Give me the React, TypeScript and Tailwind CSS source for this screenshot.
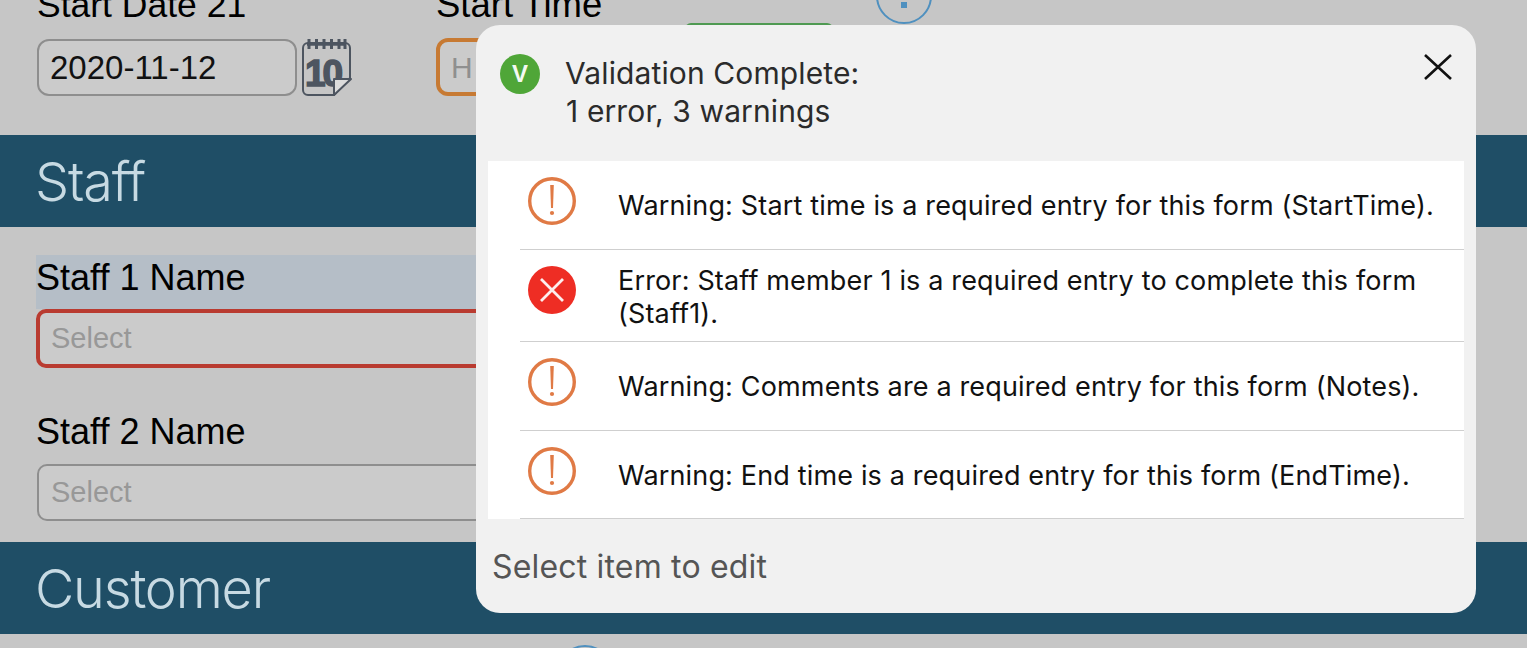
const Warn = () => (
  <svg width="50" height="50" viewBox="0 0 50 50" fill="none">
    <circle cx="25" cy="25" r="22.3" stroke="#e07a45" strokeWidth="3.4" />
    <path d="M23.2 9h3.6l-.8 23h-2L23.2 9Z" fill="#e07a45" />
    <circle cx="25" cy="37" r="2.1" fill="#e07a45" />
  </svg>
);

const Err = () => (
  <svg width="50" height="50" viewBox="0 0 50 50" fill="none">
    <circle cx="25" cy="25" r="24" fill="#ee2d24" />
    <path d="M14 14l22 22M36 14L14 36" stroke="#fdeeee" strokeWidth="2.8" />
  </svg>
);

const Calendar = () => (
  <svg width="50" height="59" viewBox="0 0 50 59" fill="none">
    <path d="M32 57H6a5 5 0 0 1-5-5V10a5 5 0 0 1 5-5h37a5 5 0 0 1 5 5v30L32 57Z" stroke="#4d5560" strokeWidth="2" />
    <path d="M7 1v10M14.500 1v10M22 1v10M29.500 1v10M37 1v10M43 1v10" stroke="#4d5560" strokeWidth="3" />
    <path d="M5 6.500h39" stroke="#4d5560" strokeWidth="2.500" />
    <text x="3" y="48" fontFamily="'Liberation Sans', sans-serif" fontWeight="700" fontSize="37" letterSpacing="-3" stroke="#4d5560" strokeWidth="1.500" fill="#4d5560">10</text>
    <path d="M32 57V41h17L32 57Z" fill="#dcdcdc" stroke="#4d5560" strokeWidth="2" strokeLinejoin="round" />
  </svg>
);

const rows = [
  { k: "w", h: "h-[89px]", text: "Warning: Start time is a required entry for this form (StartTime)." },
  { k: "e", h: "h-[92px]", text: "Error: Staff member 1 is a required entry to complete this form (Staff1)." },
  { k: "w", h: "h-[89px]", text: "Warning: Comments are a required entry for this form (Notes)." },
  { k: "w", h: "h-[88px]", text: "Warning: End time is a required entry for this form (EndTime)." },
];

export default function App() {
  return (
    <div className="relative h-[648px] w-[1527px] overflow-hidden bg-[#c6c6c6] font-['Liberation_Sans',sans-serif] text-black">
      <div className="h-[135px] overflow-hidden">
        <div className="mt-[-15px] flex px-[37px]">
          <div className="w-[399px]">
            <div className="text-[35.500px] leading-[40px]">Start Date 21</div>
            <div className="mt-[13px] flex items-center gap-[5px]">
              <div className="flex h-[57px] w-[260px] items-center rounded-[12px] border-2 border-[#8e8e8e] bg-[#cbcbcb] pl-[11px] text-[33px] text-[#111]">2020-11-12</div>
              <Calendar />
            </div>
          </div>
          <div className="w-[240px]">
            <div className="text-[36.500px] leading-[40px]">Start Time</div>
            <div className="mt-[13px] flex h-[58px] w-[200px] items-center rounded-[12px] border-4 border-[#c77a33] bg-[#cbcbcb] pl-[11px] text-[30px] text-[#8f8f8f]">H</div>
          </div>
        </div>
      </div>

      <div className="flex h-[92px] items-center bg-[#1f4e66] pl-[35px] font-['Inter',sans-serif] text-[54px] font-light tracking-[-1.2px] text-[#c7dae3]">Staff</div>

      <div className="h-[315px] px-[36px] pt-[28px]">
        <div className="h-[54px] w-[600px] bg-[#b5bec7] text-[36px] leading-[46px]">Staff 1 Name</div>
        <div className="flex h-[59px] w-[600px] items-center rounded-[10px] border-4 border-[#b93b30] bg-[#cbcbcb] pl-[11px] text-[29px] text-[#989898]">Select</div>
        <div className="mt-[41px] h-[55px] text-[36px] leading-[46px]">Staff 2 Name</div>
        <div className="ml-[1px] flex h-[57px] w-[600px] items-center rounded-[10px] border-2 border-[#8e8e8e] bg-[#cbcbcb] pl-[12px] text-[29px] text-[#989898]">Select</div>
      </div>

      <div className="flex h-[92px] items-center bg-[#1f4e66] pl-[35px] font-['Inter',sans-serif] text-[54px] font-light tracking-[-1.2px] text-[#c7dae3]">Customer</div>

      <div className="absolute left-[685px] top-[23px] h-[10px] w-[148px] rounded-t-[6px] bg-[#4f9a52]" />
      <svg className="absolute left-[876px] top-[-32px]" width="56" height="57" viewBox="0 0 56 57" fill="none">
        <circle cx="28" cy="28" r="27" stroke="#4f90bf" strokeWidth="2" />
        <rect x="25" y="34" width="6" height="6" fill="#4f90bf" />
      </svg>
      <svg className="absolute left-[557px] top-[645px]" width="56" height="57" viewBox="0 0 56 57" fill="none">
        <circle cx="28" cy="28" r="27" stroke="#4f90bf" strokeWidth="2" />
      </svg>

      <div className="absolute left-[476px] top-[25px] flex h-[588px] w-[1000px] flex-col rounded-[24px] bg-[#f1f1f1] font-['Inter',sans-serif]">
        <div className="relative flex h-[136px] pl-[24px] pt-[29px]">
          <div className="flex h-[40px] w-[40px] items-center justify-center rounded-full bg-[#4fa638] font-['Liberation_Sans',sans-serif] text-[24px] font-bold leading-none text-[#f4f9f2]">V</div>
          <div className="ml-[26px] text-[30px] leading-[38px] tracking-[0.12px] text-[#2b2b2b]">
            <div className="ml-[-1px]">Validation Complete:</div>
            <div>1 error, 3 warnings</div>
          </div>
          <svg className="absolute right-[23px] top-[29px]" width="30" height="26" viewBox="0 0 30 26" fill="none">
            <path d="M2 1l26 24M28 1L2 25" stroke="#111" strokeWidth="2.600" />
          </svg>
        </div>
        <div className="mx-[12px] bg-white">
          {rows.map((r, i) => (
            <div key={i} className="pl-[32px]">
              <div className={`flex ${r.h} border-b border-[#cfcfcf] pr-[20px]`}>
                <div className="w-[98px] shrink-0 pl-[7px] pt-[15px]">
                  {r.k === "w" ? <Warn /> : <Err />}
                </div>
                <div className={`text-[27px] leading-[33px] tracking-[0.16px] text-[#111] ${r.k === "w" ? "pt-[28px]" : "pt-[14px]"}`}>{r.text}</div>
              </div>
            </div>
          ))}
        </div>
        <div className="flex-1 pl-[16px] pt-[28px] text-[32px] leading-[40px] tracking-[0.18px] text-[#555]">Select item to edit</div>
      </div>
    </div>
  );
}
